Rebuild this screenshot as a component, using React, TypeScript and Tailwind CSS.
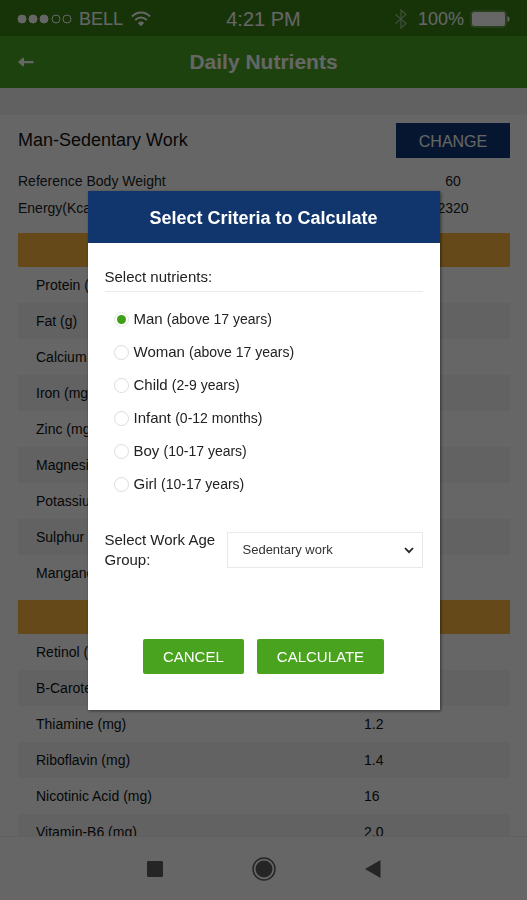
import React, { useState } from "react";

type NutrientRow = { name: string; value: string };

const minerals: NutrientRow[] = [
  { name: "Protein (g)", value: "60" },
  { name: "Fat (g)", value: "25" },
  { name: "Calcium (mg)", value: "600" },
  { name: "Iron (mg)", value: "17" },
  { name: "Zinc (mg)", value: "12" },
  { name: "Magnesium (mg)", value: "340" },
  { name: "Potassium (mg)", value: "3750" },
  { name: "Sulphur (mg)", value: "850" },
  { name: "Manganese (mg)", value: "4" },
];

const vitamins: NutrientRow[] = [
  { name: "Retinol (µg)", value: "600" },
  { name: "B-Carotene (µg)", value: "4800" },
  { name: "Thiamine (mg)", value: "1.2" },
  { name: "Riboflavin (mg)", value: "1.4" },
  { name: "Nicotinic Acid (mg)", value: "16" },
  { name: "Vitamin-B6 (mg)", value: "2.0" },
];

const groups = [
  { id: "man", label: "Man", range: "(above 17 years)" },
  { id: "woman", label: "Woman", range: "(above 17 years)" },
  { id: "child", label: "Child", range: "(2-9 years)" },
  { id: "infant", label: "Infant", range: "(0-12 months)" },
  { id: "boy", label: "Boy", range: "(10-17 years)" },
  { id: "girl", label: "Girl", range: "(10-17 years)" },
];

function StatusBar() {
  return (
    <div className="grid h-9 shrink-0 grid-cols-[1fr_auto_1fr] items-center bg-[#3a8217] px-[17px] pt-0.5 text-[18px] text-white">
      <div className="flex items-center">
        <svg width="56" height="12" viewBox="0 0 56 12" fill="currentColor" stroke="currentColor">
          <circle cx="5" cy="6" r="4" />
          <circle cx="16" cy="6" r="4" />
          <circle cx="27" cy="6" r="4" />
          <circle cx="39" cy="6" r="4" fill="none" />
          <circle cx="50" cy="6" r="4" fill="none" />
        </svg>
        <span className="ml-1.5">BELL</span>
        <svg className="ml-2" width="20" height="16" viewBox="0 0 20 16" fill="none" stroke="currentColor" strokeWidth="2">
          <path d="M1 5.5C6 .2 14 .2 19 5.5" />
          <path d="M4.2 9C7.6 5.5 12.4 5.5 15.8 9" />
          <path d="M6.9 12C8.8 10.1 11.2 10.1 13.1 12L10 15.2Z" fill="currentColor" stroke="none" />
        </svg>
      </div>
      <span className="text-xl">4:21 PM</span>
      <div className="flex items-center justify-end">
        <svg className="opacity-50" width="14" height="20" viewBox="0 0 14 20" fill="none" stroke="currentColor" strokeWidth="1.3">
          <path d="M1.5 5.5L12 14.5L7 19V1L12 5.5L1.5 14.5" />
        </svg>
        <span className="ml-2.5">100%</span>
        <svg className="ml-1.5" width="40" height="18" viewBox="0 0 40 18" fill="currentColor">
          <rect x="1" y="1" width="35" height="16" rx="3" fill="none" stroke="currentColor" opacity="0.4" />
          <rect x="2" y="2" width="33" height="14" rx="2" />
          <path d="M37.5 6C40.2 7 40.2 11 37.5 12Z" />
        </svg>
      </div>
    </div>
  );
}

function NutrientTable({ title, rows }: { title: string; rows: NutrientRow[] }) {
  return (
    <table className="mb-[9px] w-full text-left text-sm text-[#111]">
      <thead>
        <tr className="h-[34px] bg-[#fcb63c]">
          <th colSpan={2} className="p-0 text-center text-base font-normal">
            {title}
          </th>
        </tr>
      </thead>
      <tbody>
        {rows.map((row) => (
          <tr key={row.name} className="h-9 even:bg-[#f4f4f4]">
            <td className="w-2/3 p-0 pl-[18px]">{row.name}</td>
            <td className="p-0 pl-[18px]">{row.value}</td>
          </tr>
        ))}
      </tbody>
    </table>
  );
}

function BottomNav() {
  return (
    <nav className="h-16 shrink-0 border-t border-[#eee] bg-white text-[#5c5c5c]">
      <div className="mx-auto grid h-full w-[327px] grid-cols-3 place-items-center">
        <button type="button" aria-label="Recent apps">
          <svg width="16" height="16" viewBox="0 0 16 16">
            <rect width="16" height="16" rx="1" fill="currentColor" />
          </svg>
        </button>
        <button type="button" aria-label="Home">
          <svg width="24" height="24" viewBox="0 0 24 24">
            <circle cx="12" cy="12" r="11" fill="none" stroke="currentColor" strokeWidth="1.5" />
            <circle cx="12" cy="12" r="8.5" fill="currentColor" />
          </svg>
        </button>
        <button type="button" aria-label="Back">
          <svg width="16" height="18" viewBox="0 0 16 18">
            <path d="M0 9L15.5 0V18Z" fill="currentColor" />
          </svg>
        </button>
      </div>
    </nav>
  );
}

function CriteriaDialog() {
  const [group, setGroup] = useState("man");
  const [work, setWork] = useState("sedentary");

  const handleSubmit = (e: React.FormEvent<HTMLFormElement>) => {
    e.preventDefault();
  };

  return (
    <div className="fixed inset-0 flex items-center justify-center bg-black/60">
      <form
        onSubmit={handleSubmit}
        role="dialog"
        aria-labelledby="dialog-title"
        className="w-full max-w-[352px] bg-white text-[15px] text-[#222] shadow-[1px_1px_3px_rgba(0,0,0,0.5)]"
      >
        <h2
          id="dialog-title"
          className="flex h-[52px] items-center justify-center bg-[#11366d] pt-[3px] text-[18px] font-bold text-white"
        >
          Select Criteria to Calculate
        </h2>
        <div className="px-[17px] pt-6 pb-9">
          <fieldset>
            <legend className="w-full border-b border-[#e9e9e9] pb-1 leading-5">Select nutrients:</legend>
            <div className="pt-[11px] pl-[9px]">
              {groups.map((item) => (
                <label key={item.id} className="flex h-[33px] items-center">
                  <input
                    type="radio"
                    name="group"
                    value={item.id}
                    checked={group === item.id}
                    onChange={() => setGroup(item.id)}
                    className="mr-[5px] size-[15px] appearance-none rounded-full border border-[#dcdcdc] bg-clip-content p-[2px] checked:border-[#e2ecdd] checked:bg-[#3fa018]"
                  />
                  <span>
                    {item.label} <span className="text-sm">{item.range}</span>
                  </span>
                </label>
              ))}
            </div>
          </fieldset>
          <div className="mt-[29px] flex items-center">
            <label htmlFor="work" className="w-[122px] shrink-0 leading-5">
              Select Work Age Group:
            </label>
            <div className="relative flex-1">
              <select
                id="work"
                value={work}
                onChange={(e) => setWork(e.target.value)}
                className="block h-9 w-full appearance-none border border-[#e9e9e9] bg-white pl-[15px] text-[13px] text-[#333]"
              >
                <option value="sedentary">Sedentary work</option>
                <option value="moderate">Moderate work</option>
                <option value="heavy">Heavy work</option>
              </select>
              <svg
                className="pointer-events-none absolute top-[15px] right-[9px]"
                width="10"
                height="7"
                viewBox="0 0 10 7"
                fill="none"
                stroke="#222"
                strokeWidth="1.8"
              >
                <path d="M1 1L5 5.2L9 1" />
              </svg>
            </div>
          </div>
          <div className="mt-[69px] flex justify-center gap-[13px] text-white">
            <button type="button" className="h-[35px] rounded-xs bg-[#4aa31f] px-5 pt-[3px]">
              CANCEL
            </button>
            <button type="submit" className="h-[35px] rounded-xs bg-[#4aa31f] px-5 pt-[3px]">
              CALCULATE
            </button>
          </div>
        </div>
      </form>
    </div>
  );
}

export default function App() {
  return (
    <div className="flex h-screen flex-col bg-white font-['Liberation_Sans',Arial,sans-serif]">
      <StatusBar />
      <header className="grid h-[52px] shrink-0 grid-cols-[1fr_auto_1fr] items-center bg-[#4ba622] px-[18px] text-white">
        <button type="button" aria-label="Go back" className="justify-self-start">
          <svg width="16" height="10" viewBox="0 0 16 10" fill="currentColor">
            <path d="M0 5L5 .5Q6 .5 6 2V4H15.5V6.2H6V8Q6 9.5 5 9.5Z" />
          </svg>
        </button>
        <h1 className="text-[21px] font-bold">Daily Nutrients</h1>
      </header>
      <main className="min-h-0 flex-1 overflow-hidden">
        <div className="h-[27px] bg-[#f2f2f2]" />
        <div className="pt-2 pr-[17px] pl-[18px]">
          <div className="flex items-center justify-between">
            <h2 className="text-[18px] text-[#111]">Man-Sedentary Work</h2>
            <button type="button" className="h-[35px] w-[114px] bg-[#11387a] pt-[3px] text-base text-white">
              CHANGE
            </button>
          </div>
          <dl className="mt-[10px] mb-[11px] grid grid-cols-[1fr_114px] text-sm leading-[27px] text-[#222]">
            <dt>Reference Body Weight</dt>
            <dd className="text-center">60</dd>
            <dt>Energy(Kcal/d)</dt>
            <dd className="text-center">2320</dd>
          </dl>
          <NutrientTable title="Macronutrients and Minerals" rows={minerals} />
          <NutrientTable title="Vitamins" rows={vitamins} />
        </div>
      </main>
      <BottomNav />
      <CriteriaDialog />
    </div>
  );
}
